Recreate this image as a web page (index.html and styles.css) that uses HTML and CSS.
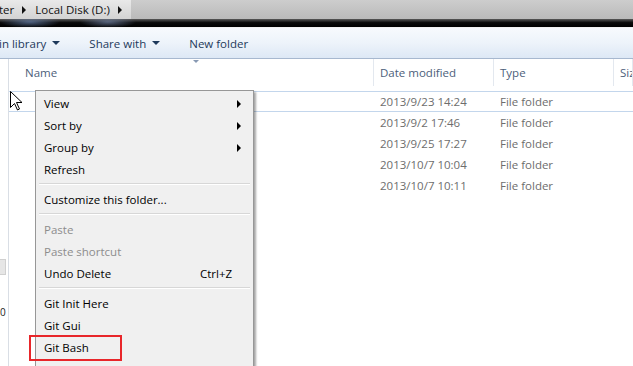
FILE: index.html
```html
<!DOCTYPE html>
<html lang="en">
<head>
    <meta charset="UTF-8">
    <title>Local Disk (D:)</title>
    <link rel="stylesheet" href="styles.css">
</head>
<body>
    <div class="window">
        <div class="address">
            <div class="crumbs">
                <span class="crumb first">ter</span>
                <span class="sep-arrow"></span>
                <span class="crumb">Local Disk (D:)</span>
                <span class="sep-arrow"></span>
            </div>
        </div>
        <div class="frame"></div>
        <div class="toolbar">
            <span class="tool first">in library <i class="drop"></i></span>
            <span class="tool">Share with <i class="drop"></i></span>
            <span class="tool">New folder</span>
        </div>
        <div class="main">
            <div class="nav">
                <div class="nav-sel"></div>
                <div class="nav-num">0</div>
            </div>
            <div class="list">
                <div class="head">
                    <div class="col name sorted">Name</div>
                    <div class="col date">Date modified</div>
                    <div class="col type">Type</div>
                    <div class="col size">Size</div>
                </div>
                <div class="rows">
                    <div class="row hot"><span></span><span>2013/9/23 14:24</span><span>File folder</span><span></span></div>
                    <div class="row"><span></span><span>2013/9/2 17:46</span><span>File folder</span><span></span></div>
                    <div class="row"><span></span><span>2013/9/25 17:27</span><span>File folder</span><span></span></div>
                    <div class="row"><span></span><span>2013/10/7 10:04</span><span>File folder</span><span></span></div>
                    <div class="row"><span></span><span>2013/10/7 10:11</span><span>File folder</span><span></span></div>
                </div>
            </div>
        </div>

        <svg class="cursor" width="13" height="20" viewBox="0 0 13 20">
            <path d="M0.5 0.5 L0.5 16.5 L4.5 12.5 L7.5 19 L9.5 18 L6.5 11.5 L12 11.5 Z" fill="#fff" stroke="#000" stroke-width="1"/>
        </svg>

        <div class="menu">
            <div class="item">View<i class="sub"></i></div>
            <div class="item">Sort by<i class="sub"></i></div>
            <div class="item">Group by<i class="sub"></i></div>
            <div class="item">Refresh</div>
            <div class="divider"></div>
            <div class="item">Customize this folder...</div>
            <div class="divider"></div>
            <div class="item off">Paste</div>
            <div class="item off">Paste shortcut</div>
            <div class="item">Undo Delete<span class="key">Ctrl+Z</span></div>
            <div class="divider"></div>
            <div class="item">Git Init Here</div>
            <div class="item">Git Gui</div>
            <div class="item">Git Bash<span class="mark"></span></div>
        </div>
    </div>
</body>
</html>
```
FILE: styles.css
```css
        body {
            margin: 0;
            padding: 0;
            font-family: "Open Sans", "Noto Sans", sans-serif;
            font-size: 11.5px;
            overflow: hidden;
            background: #fff;
        }
        .window {
            position: relative;
            width: 633px;
            height: 366px;
            overflow: hidden;
        }
        .address {
            height: 19px;
            background: linear-gradient(#cdcdcd, #bababa);
            display: flex;
        }
        .crumbs {
            width: 131px;
            display: flex;
            align-items: center;
            background: linear-gradient(#e9e9e9, #d3d3d3);
            color: #111;
        }
        .crumb.first {
            margin-left: -1px;
        }
        .sep-arrow {
            width: 0;
            height: 0;
            border-left: 4px solid #111;
            border-top: 4px solid transparent;
            border-bottom: 4px solid transparent;
            margin: 0 9px 0 8px;
        }
        .frame {
            height: 8px;
            background:
                radial-gradient(ellipse 30px 6px at 30px 3px, rgba(120,150,200,.6), transparent),
                radial-gradient(ellipse 28px 6px at 108px 3px, rgba(130,150,190,.6), transparent),
                linear-gradient(#5a5a5a, #0a0a0a 45%, #000);
            border-bottom: 1px solid #f2f2f2;
        }
        .toolbar {
            height: 30px;
            display: flex;
            align-items: center;
            background: linear-gradient(#f7fafd, #edf3fa 50%, #dde8f5);
            border-bottom: 1px solid #a7b8cf;
            color: #1e395b;
        }
        .tool {
            margin-left: 29px;
            display: flex;
            align-items: center;
        }
        .tool.first {
            margin-left: -1px;
        }
        .drop {
            width: 0;
            height: 0;
            border-top: 4px solid #1e395b;
            border-left: 4px solid transparent;
            border-right: 4px solid transparent;
            margin-left: 6px;
        }
        .main {
            display: flex;
            height: 307px;
        }
        .nav {
            flex: 0 0 8px;
            width: 8px;
            border-right: 1px solid #d9dee5;
            overflow: hidden;
        }
        .nav-sel {
            margin-top: 200px;
            width: 5px;
            height: 14px;
            background: #e6e6e6;
            border: 1px solid #d0d0d0;
            border-left: none;
        }
        .nav-num {
            margin-top: 30px;
            color: #222;
            font-size: 10px;
        }
        .list {
            flex: 1;
            min-width: 0;
        }
        .head, .row {
            display: grid;
            grid-template-columns: 365px 120px 120px minmax(0, 1fr);
        }
        .head {
            height: 27px;
            color: #4c607a;
        }
        .col {
            position: relative;
            display: flex;
            align-items: center;
            border-right: 1px solid #e3e8ef;
            padding-left: 6px;
            overflow: hidden;
        }
        .col.name {
            padding-left: 16px;
            overflow: visible;
        }
        .col.sorted::before {
            content: "";
            position: absolute;
            top: 1px;
            left: 184px;
            border-top: 3px solid #8899b3;
            border-left: 3px solid transparent;
            border-right: 3px solid transparent;
        }
        .rows {
            padding-top: 5px;
        }
        .row {
            height: 21px;
            box-sizing: border-box;
            align-items: center;
            color: #6d6d6d;
        }
        .row span {
            padding-left: 6px;
        }
        .row.hot {
            border-top: 1px solid #c3d6ec;
            border-bottom: 1px solid #c3d6ec;
        }
        .cursor {
            position: absolute;
            left: 10px;
            top: 91px;
        }
        .menu {
            position: absolute;
            left: 35px;
            top: 90px;
            width: 217px;
            height: 290px;
            padding-top: 1px;
            background: #f0f0f0;
            border: 1px solid #979797;
            box-shadow: 2px 2px 2px rgba(0,0,0,.35);
            color: #000;
        }
        .item {
            position: relative;
            height: 22px;
            line-height: 23px;
            padding-left: 8px;
        }
        .item.off {
            color: #8d8d8d;
        }
        .sub {
            position: absolute;
            right: 12px;
            top: 8px;
            border-left: 4px solid #000;
            border-top: 4px solid transparent;
            border-bottom: 4px solid transparent;
        }
        .key {
            position: absolute;
            left: 164px;
        }
        .divider {
            height: 8px;
            margin: 0 3px;
            background: linear-gradient(transparent 3px, #d7d7d7 3px, #d7d7d7 4px, #fff 4px, #fff 5px, transparent 5px);
        }
        .mark {
            position: absolute;
            left: -7px;
            top: -1px;
            width: 89px;
            height: 22px;
            border: 2px solid #e8262a;
        }
```
